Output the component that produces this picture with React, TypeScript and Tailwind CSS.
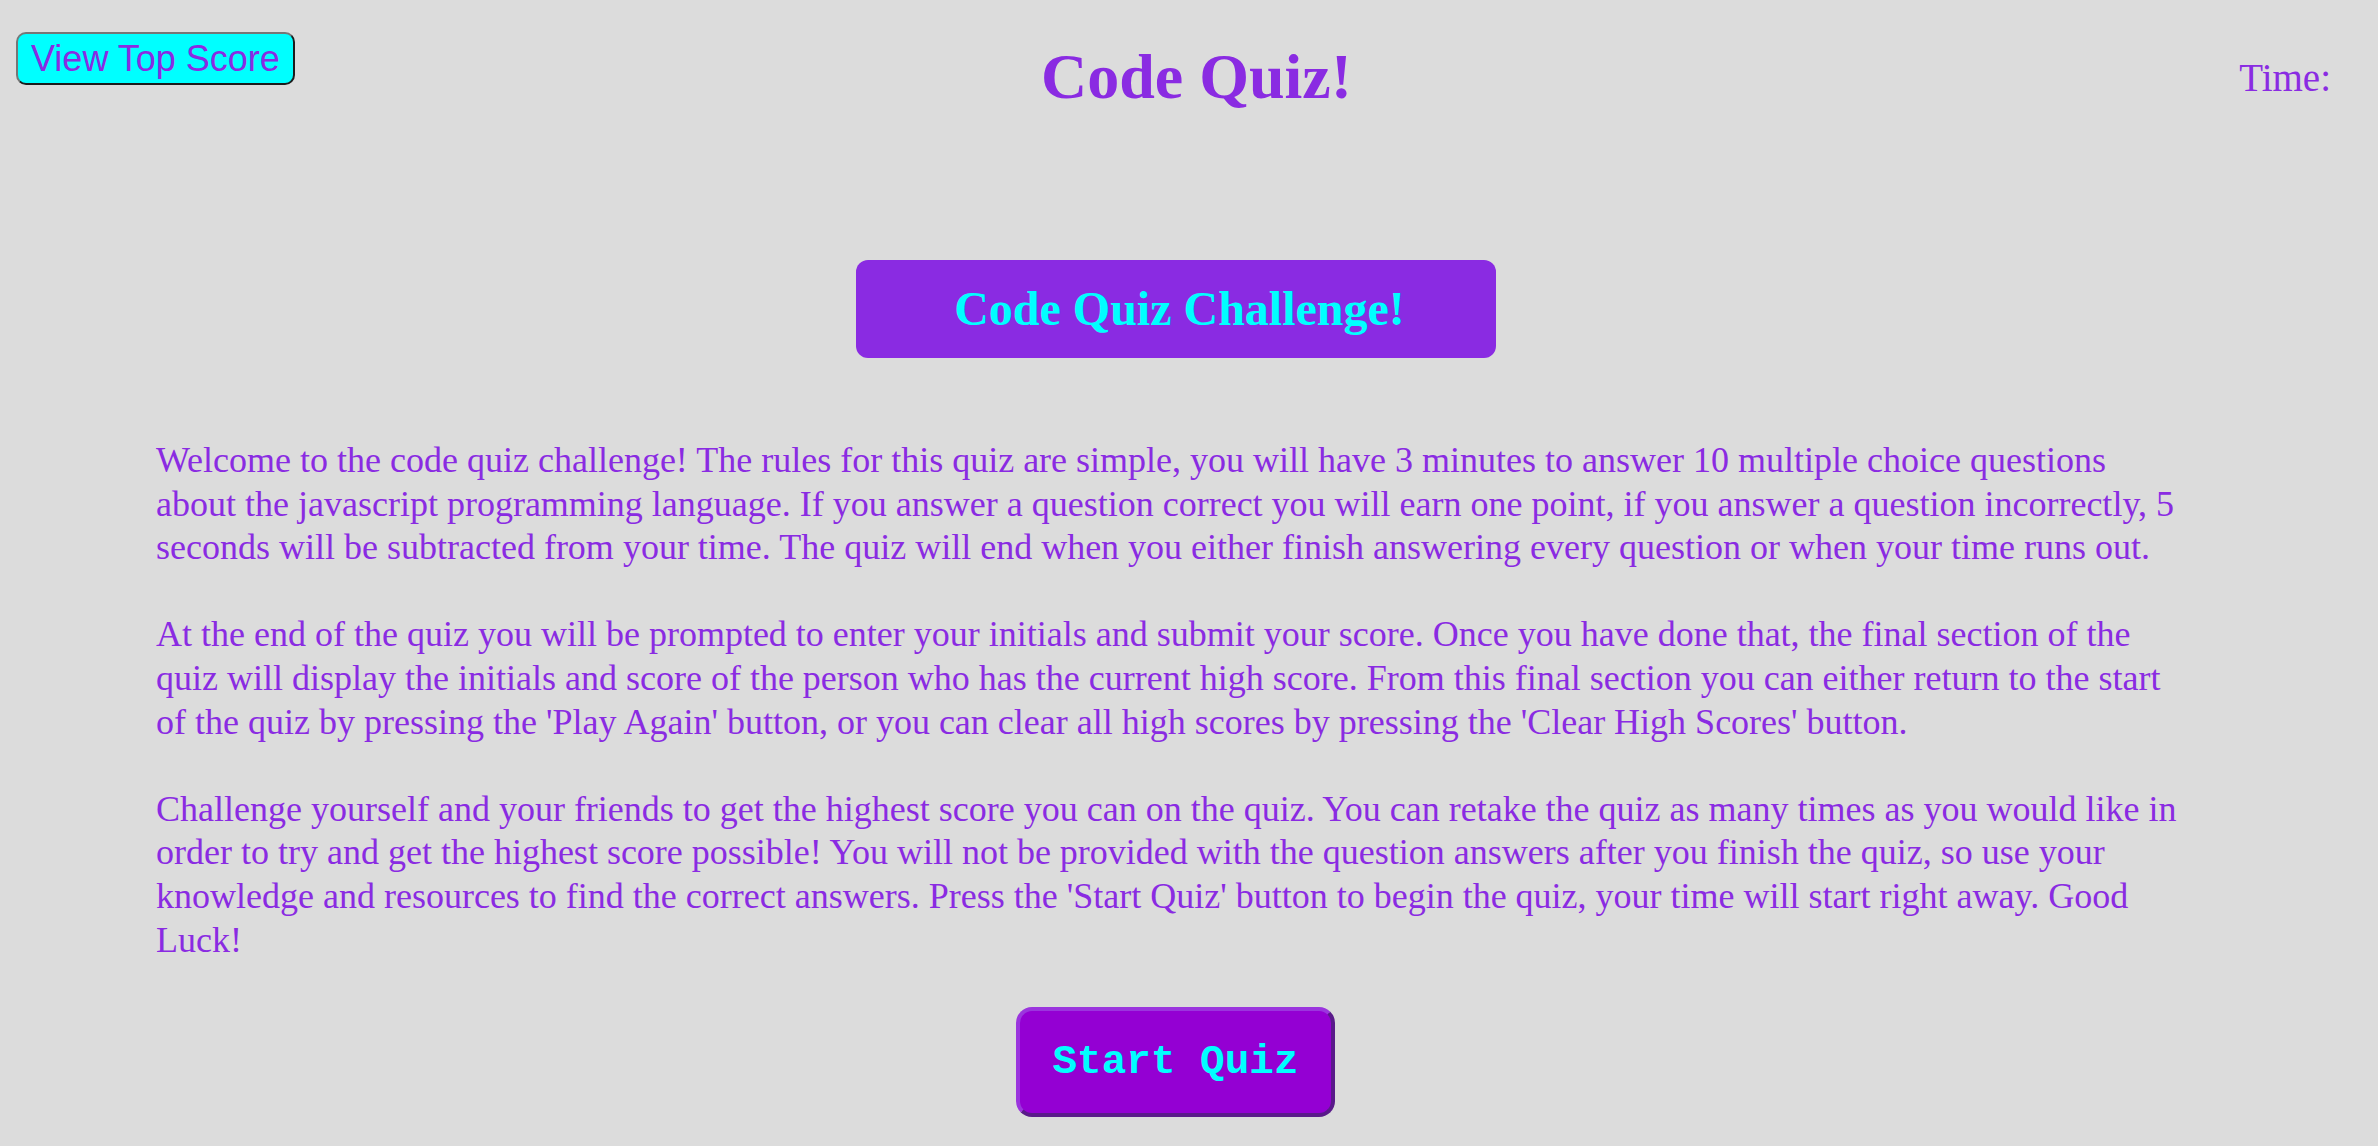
export default function App() {
  return (
    <div className="h-screen overflow-hidden bg-[#dcdcdc] text-[#8a2be2] font-['Liberation_Serif','Times_New_Roman',serif]">
      {/* Header */}
      <header className="flex items-start">
        <div className="flex-1 pl-[16px] pt-[32px]">
          <button
            type="button"
            className="flex h-[53px] items-center rounded-[10px] border-2 border-t-[#767676] border-l-[#767676] border-r-[#1c1c1c] border-b-[#1c1c1c] bg-[#00ffff] px-[13px] font-['Liberation_Sans',Arial,sans-serif] text-[36px] leading-none text-[#8a2be2]"
          >
            View Top Score
          </button>
        </div>
        <h1 className="ml-[46px] pt-[45px] text-[64px] font-bold leading-[64px]">Code Quiz!</h1>
        <div className="flex flex-1 justify-end pr-[47px] pt-[58px]">
          <span className="text-[39px] leading-[40px]">Time:</span>
        </div>
      </header>

      {/* Challenge title */}
      <div className="mt-[151px] flex justify-center pr-[27px]">
        <div className="flex h-[98px] w-[640px] items-center justify-center rounded-[12px] bg-[#8a2be2] pl-[8px]">
          <h2 className="whitespace-nowrap text-[48px] font-bold leading-none text-[#00ffff]">Code Quiz Challenge!</h2>
        </div>
      </div>

      {/* Rules */}
      <div className="mt-[81px] pl-[156px]">
        <div className="flex w-[2026px] flex-col gap-[43.6px] text-[36px] leading-[43.6px]">
          <p>
            Welcome to the code quiz challenge! The rules for this quiz are simple, you will have 3 minutes to answer
            10 multiple choice questions about the javascript programming language. If you answer a question correct
            you will earn one point, if you answer a question incorrectly, 5 seconds will be subtracted from your time.
            The quiz will end when you either finish answering every question or when your time runs out.
          </p>
          <p>
            At the end of the quiz you will be prompted to enter your initials and submit your score. Once you have
            done that, the final section of the quiz will display the initials and score of the person who has the
            current high score. From this final section you can either return to the start of the quiz by pressing
            the 'Play Again' button, or you can clear all high scores by pressing the 'Clear High Scores' button.
          </p>
          <p>
            Challenge yourself and your friends to get the highest score you can on the quiz. You can retake the quiz
            as many times as you would like in order to try and get the highest score possible! You will not be
            provided with the question answers after you finish the quiz, so use your knowledge and resources to find
            the correct answers. Press the 'Start Quiz' button to begin the quiz, your time will start right away. Good
            Luck!
          </p>
        </div>
      </div>

      {/* Start */}
      <div className="mt-[45px] flex justify-center pr-[27px]">
        <button
          type="button"
          className="flex h-[110px] w-[319px] items-center justify-center rounded-[16px] border-4 border-t-[#9b35de] border-l-[#9b35de] border-r-[#5a1a8a] border-b-[#5a1a8a] bg-[#9400d3]"
        >
          <span className="whitespace-nowrap font-['Liberation_Mono','Courier_New',monospace] text-[41px] font-bold leading-none text-[#00ffff]">
            Start Quiz
          </span>
        </button>
      </div>
    </div>
  );
}
